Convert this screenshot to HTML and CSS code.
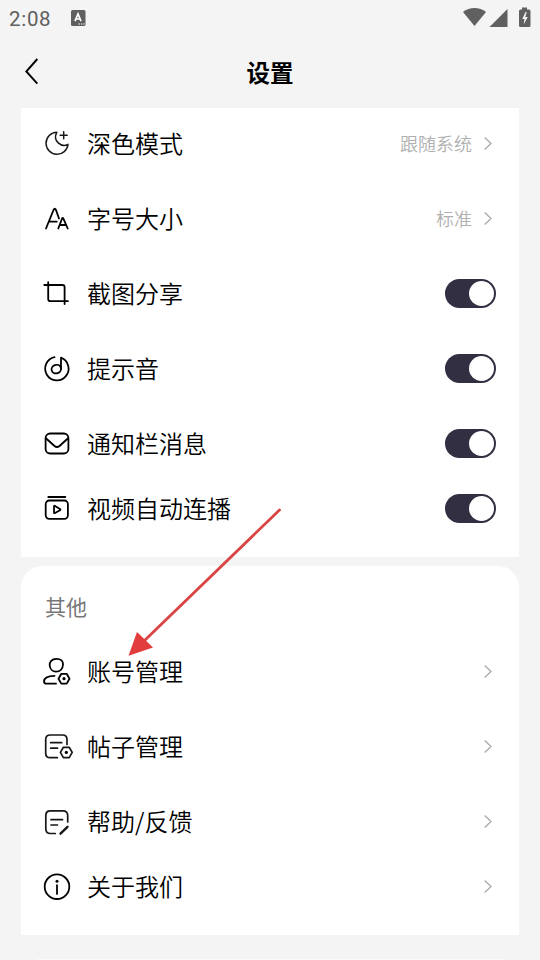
FILE: index.html
```
<!DOCTYPE html>
<html lang="zh-CN">
<head>
<meta charset="utf-8">
<title>设置</title>
<link rel="stylesheet" href="styles.css">
</head>
<body>
<div class="screen">
  <div class="status">
    <span class="time">2:08</span>
    <svg class="lang" width="15" height="16" viewBox="0 0 15 16"><rect width="14.5" height="16" rx="1.5" fill="#606060"/><path d="M4 11.2 7 4l3 7.2M5.2 9h3.600" fill="none" stroke="#fff" stroke-width="1.700"/><path d="M7.500 14H9M10 14h1.300M12.300 14h1.300" stroke="#fff" stroke-width="1.200"/></svg>
    <svg class="signals" width="68" height="22" viewBox="0 0 68 22"><g fill="#606060"><path d="M0 6C6.500.6 16.500.6 23 6L11.500 20Z"/><path d="M44.500 3v18H26.500Z"/><path d="M57 3.500h2V1.500h5v2h2q1.500 0 1.500 1.500V19.500q0 1.500-1.500 1.500H57.500Q56 21 56 19.500V5q0-1.500 1.500-1.500Z"/></g><path d="M62.500 6 59.300 13H61.500L60.700 18.500 64.700 11H62.300L63.700 6Z" fill="#f4f4f4"/></svg>
  </div>
  <header class="header">
    <svg class="back" width="16" height="28" viewBox="0 0 16 28"><path d="M13.300 2 2.300 14.500 13.300 26.700" fill="none" stroke="#000" stroke-width="1.900"/></svg>
    <h1>设置</h1>
  </header>

  <section class="card card-top">
    <div class="row">
      <svg class="icon thin" viewBox="0 0 30 30"><path d="M14.800 3.800A11 11 0 1 0 26 15.800C19.500 19.300 10.200 12.500 14.800 3.800ZM21.700 3.300v7M18.200 6.800h7"/></svg>
      <span class="label">深色模式</span><span class="value">跟随系统</span>
      <svg class="chev" viewBox="0 0 8 14"><path d="M.7 1 7 7 .7 13"/></svg>
    </div>
    <div class="row">
      <svg class="icon" viewBox="0 0 30 30"><path d="M4 25 11.500 6.500Q12.800 4 14 6.500L17 15M7.300 18.200h7.400M16.300 25l3.700-9.800q.7-1.500 1.400 0L25.700 25M17.700 21.500h6.500"/></svg>
      <span class="label">字号大小</span><span class="value">标准</span>
      <svg class="chev" viewBox="0 0 8 14"><path d="M.7 1 7 7 .7 13"/></svg>
    </div>
    <div class="row">
      <svg class="icon" viewBox="0 0 30 30"><path d="M2.300 6.500H20.500Q22.600 6.500 22.600 8.600V25.500M6.200 3.700V20.400Q6.200 22.600 8.300 22.600H26"/></svg>
      <span class="label">截图分享</span><span class="toggle"></span>
    </div>
    <div class="row">
      <svg class="icon" viewBox="0 0 30 30"><path d="M12.500 3.700A11.700 11.700 0 1 0 19 4.200V15.500"/><ellipse cx="14.300" cy="15.600" rx="4.800" ry="4.200" transform="rotate(-20 14.300 15.600)"/></svg>
      <span class="label">提示音</span><span class="toggle"></span>
    </div>
    <div class="row">
      <svg class="icon" viewBox="0 0 30 30"><rect x="3.600" y="5" width="22.800" height="20" rx="4.500"/><path d="M4.200 10 12.500 17.500Q15 19.500 17.500 17.500L25.800 10"/></svg>
      <span class="label">通知栏消息</span><span class="toggle"></span>
    </div>
    <div class="row short">
      <svg class="icon" viewBox="0 0 30 30"><path d="M6.300 3.500h17M12 12.800v6.200q0 1 1 .5l5-2.800q1-.7 0-1.300L13 12.400q-1-.5-1 .4Z"/><rect x="3.700" y="7" width="22.200" height="18.300" rx="3.500"/></svg>
      <span class="label">视频自动连播</span><span class="toggle"></span>
    </div>
  </section>

  <section class="card card-other">
    <h2>其他</h2>
    <div class="row">
      <svg class="icon" viewBox="0 0 30 30"><path d="M14.500 2.300C9.500 2.300 7.400 5.800 7.700 9c.3 3.600 3 6.200 6.300 6.200 4.200 0 6.800-3.200 7-7 .2-3.600-1.900-5.900-6.500-5.900ZM12.500 19.300C7 19.300 2 21 2 25q0 2.200 2.500 2.200H14"/><path d="M19.300 17.300h5.400l2.800 4.900-2.800 4.900h-5.400l-2.800-4.900Z"/><circle class="dot" cx="22" cy="22.200" r="1.600"/></svg>
      <span class="label">账号管理</span>
      <svg class="chev" viewBox="0 0 8 14"><path d="M.7 1 7 7 .7 13"/></svg>
    </div>
    <div class="row">
      <svg class="icon soft" viewBox="0 0 30 30"><path d="M25 13V8Q25 3.500 20.500 3.500H8.200Q3.700 3.500 3.700 8V21.700Q3.700 26.200 8.200 26.200H15.300M8.700 11.200h11M8.700 16.700h6.800"/><path d="M21.400 15.800h5.800l3 5.100-3 5.200h-5.800l-3-5.200Z"/><circle class="dot" cx="24.300" cy="20.900" r="1.600"/></svg>
      <span class="label">帖子管理</span>
      <svg class="chev" viewBox="0 0 8 14"><path d="M.7 1 7 7 .7 13"/></svg>
    </div>
    <div class="row">
      <svg class="icon soft" viewBox="0 0 30 30"><path d="M25.700 15.500V9Q25.700 4.400 21 4.400H8.500Q3.800 4.400 3.800 9V22.500Q3.800 27 8.500 27H13.300M9 13.200h11.500M9 18.500h6.500"/><path class="pen" d="M25.500 20.300 18.500 27.200"/></svg>
      <span class="label">帮助/反馈</span>
      <svg class="chev" viewBox="0 0 8 14"><path d="M.7 1 7 7 .7 13"/></svg>
    </div>
    <div class="row short">
      <svg class="icon" viewBox="0 0 30 30"><circle cx="15" cy="15.200" r="12.300"/><path d="M15 13.600v8.800"/><circle class="dot" cx="15" cy="9.700" r="1.500"/></svg>
      <span class="label">关于我们</span>
      <svg class="chev" viewBox="0 0 8 14"><path d="M.7 1 7 7 .7 13"/></svg>
    </div>
  </section>
  <div class="next-card"></div>

  <svg class="arrow" width="156" height="152" viewBox="0 0 156 152"><path d="M152.500 4 16 136" stroke="#d94444" stroke-width="2.800" stroke-linecap="round"/><path d="M1.500 149.800 10 126 26 141.500Z" fill="#e23c3c"/></svg>
</div>
</body>
</html>
```
FILE: styles.css
```
* { box-sizing: border-box; }
body {
  margin: 0;
  background: #f4f4f4;
  color: #000;
  font-family: "Noto Sans CJK SC", sans-serif;
}
.screen { position: relative; height: 960px; overflow: hidden; }
.status {
  display: flex;
  align-items: center;
  height: 36px;
  padding: 0 9px;
}
.time {
  width: 62px;
  font: 20.5px/36px Roboto, sans-serif;
  letter-spacing: .7px;
  color: #606060;
  padding-top: 1px;
}
.signals { margin-left: auto; margin-top: -2px; }
.header {
  display: grid;
  grid-template-columns: 60px 1fr 60px;
  align-items: center;
  height: 72px;
}
.back { margin: -2px 0 0 24px; }
h1 {
  margin: 0;
  text-align: center;
  font-size: 23.5px;
  line-height: 36px;
  font-weight: 700;
}
.card {
  display: flex;
  flex-direction: column;
  gap: 24px;
  margin: 0 21px;
  padding: 10px 23px 0 21px;
  background: #fff;
}
.card-top { height: 449px; }
.card-other {
  height: 369px;
  margin-top: 9px;
  padding-top: 25px;
  border-radius: 21px 21px 0 0;
}
h2 {
  margin: 0 0 1px 3px;
  height: 30px;
  font-size: 21px;
  line-height: 30px;
  font-weight: 400;
  color: #777;
}
.row { display: flex; align-items: center; height: 51px; flex: none; }
.short { height: 31px; }
.icon {
  width: 30px;
  height: 31px;
  margin-right: 15px;
  overflow: visible;
  fill: none;
  stroke: #000;
  stroke-width: 1.8;
  stroke-linecap: round;
  stroke-linejoin: round;
}
.thin { stroke: #171717; stroke-width: 1.5; }
.soft { stroke: #171717; stroke-width: 1.7; }
.dot { fill: #000; stroke: none; }
.pen { stroke-width: 2.4; }
.label {
  margin-top: -2px;
  font-size: 24px;
  line-height: 36px;
  font-weight: 350;
}
.value {
  margin: -2px 12px 0 auto;
  font-size: 18px;
  line-height: 30px;
  font-weight: 350;
  color: #b0b0b0;
}
.chev {
  width: 8px;
  height: 15px;
  margin: 0 4px 0 auto;
  fill: none;
  stroke: #aaa;
  stroke-width: 1.3;
}
.value + .chev { margin-left: 0; }
.toggle {
  display: flex;
  justify-content: flex-end;
  align-items: center;
  width: 51px;
  height: 29px;
  margin-left: auto;
  padding-right: 2px;
  border-radius: 15px;
  background: #332f43;
}
.toggle::after {
  content: "";
  width: 25px;
  height: 25px;
  border-radius: 50%;
  background: #fff;
}
.next-card { height: 1px; margin: 24px 36px 0; background: #fafafa; }
.arrow { position: absolute; left: 127px; top: 506px; }
```
